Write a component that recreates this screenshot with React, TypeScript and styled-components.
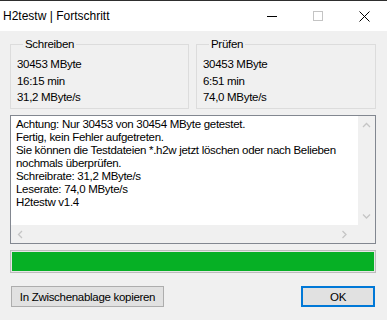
import React from "react";
import styled, { createGlobalStyle } from "styled-components";

const Global = createGlobalStyle`
  html, body { margin: 0; padding: 0; background: #f0f0f0; }
  * { box-sizing: border-box; }
`;

const FONT = `"Liberation Sans", Arial, sans-serif`;

const Window = styled.div`
  width: 387px;
  height: 320px;
  display: flex;
  flex-direction: column;
  background: #f0f0f0;
  border-top: 1px solid #2e2e2e;
  font-family: ${FONT};
  font-size: 11.5px;
  letter-spacing: -0.3px;
  color: #000;
  overflow: hidden;
`;

const TitleBar = styled.div`
  height: 30px;
  background: #fff;
  display: flex;
  align-items: center;
  flex-shrink: 0;
`;

const Title = styled.div`
  flex: 1;
  padding-left: 3px;
  font-size: 12px;
  letter-spacing: 0;
  color: #000;
`;

const CtrlButton = styled.div`
  width: 46px;
  height: 30px;
  display: flex;
  align-items: center;
  justify-content: center;
`;

const Body = styled.div`
  flex: 1;
  display: flex;
  flex-direction: column;
  padding: 6px 11px 0 10px;
`;

const GroupRow = styled.div`
  display: grid;
  grid-template-columns: 179px 180px;
  column-gap: 7px;
`;

const Group = styled.fieldset`
  margin: 0;
  padding: 5px 6px 3px 6px;
  min-width: 0;
  border: 1px solid #dcdcdc;
  height: 72px;
`;

const Legend = styled.legend`
  padding: 0 2px;
  margin-left: 6px;
  line-height: 14px;
  font-size: 11.5px;
`;

const GroupLine = styled.div`
  line-height: 16.5px;
  white-space: nowrap;
`;

const EditBox = styled.div`
  margin-top: 6px;
  height: 129px;
  border: 1px solid #828790;
  display: grid;
  grid-template-columns: 1fr 17px;
  grid-template-rows: 1fr 19px;
  background: #fff;
`;

const EditText = styled.div`
  padding: 2px 0 0 5px;
  line-height: 13px;
  white-space: nowrap;
  overflow: hidden;
  background: #fff;
`;

const VScroll = styled.div`
  background: #f0f0f0;
  display: flex;
  flex-direction: column;
  justify-content: space-between;
  align-items: center;
  padding: 6px 0 4px;
`;

const HScroll = styled.div`
  grid-column: 1 / 2;
  background: #f0f0f0;
  border-top: 1px solid #fff;
  display: flex;
  justify-content: space-between;
  align-items: center;
  padding: 0 10px 0 6px;
`;

const Corner = styled.div`
  background: #f0f0f0;
`;

const Progress = styled.div`
  margin-top: 6px;
  height: 23px;
  border: 1px solid #bcbcbc;
  background: #e6e6e6;
  padding: 1px;
`;

const ProgressFill = styled.div`
  height: 100%;
  background: #06b025;
`;

const ButtonRow = styled.div`
  margin-top: 13px;
  display: flex;
  justify-content: space-between;
  padding: 0 1px;
`;

const Button = styled.button<{ $default?: boolean; $w: number }>`
  width: ${(p) => p.$w}px;
  height: 21px;
  padding: 0;
  font-family: ${FONT};
  font-size: 11.5px;
  letter-spacing: -0.3px;
  color: #000;
  background: #e1e1e1;
  border: ${(p) => (p.$default ? "2px solid #0078d7" : "1px solid #adadad")};
  display: flex;
  align-items: center;
  justify-content: center;
`;

const Arrow = ({ dir }: { dir: "up" | "down" | "left" | "right" }) => {
  const d = {
    up: "M1 5 L4.5 1.5 L8 5",
    down: "M1 1.5 L4.5 5 L8 1.5",
    left: "M5 1 L1.5 4.5 L5 8",
    right: "M1.5 1 L5 4.5 L1.5 8",
  }[dir];
  const vertical = dir === "up" || dir === "down";
  return (
    <svg width={vertical ? 9 : 7} height={vertical ? 7 : 9} viewBox={vertical ? "0 0 9 7" : "0 0 7 9"}>
      <path d={d} fill="none" stroke="#c5c5c5" strokeWidth="1.3" />
    </svg>
  );
};

export default function App() {
  return (
    <>
      <Global />
      <Window>
        <TitleBar>
          <Title>H2testw | Fortschritt</Title>
          <CtrlButton>
            <svg width="10" height="10" viewBox="0 0 10 10">
              <path d="M0 5.5 H10" stroke="#000" strokeWidth="1" />
            </svg>
          </CtrlButton>
          <CtrlButton>
            <svg width="10" height="10" viewBox="0 0 10 10">
              <rect x="0.5" y="0.5" width="9" height="9" fill="none" stroke="#c4c4c4" strokeWidth="1" />
            </svg>
          </CtrlButton>
          <CtrlButton>
            <svg width="11" height="11" viewBox="0 0 11 11">
              <path d="M0.5 0.5 L10.5 10.5 M10.5 0.5 L0.5 10.5" stroke="#000" strokeWidth="1" />
            </svg>
          </CtrlButton>
        </TitleBar>
        <Body>
          <GroupRow>
            <Group>
              <Legend>Schreiben</Legend>
              <GroupLine>30453 MByte</GroupLine>
              <GroupLine>16:15 min</GroupLine>
              <GroupLine>31,2 MByte/s</GroupLine>
            </Group>
            <Group>
              <Legend>Prüfen</Legend>
              <GroupLine>30453 MByte</GroupLine>
              <GroupLine>6:51 min</GroupLine>
              <GroupLine>74,0 MByte/s</GroupLine>
            </Group>
          </GroupRow>
          <EditBox>
            <EditText>
              Achtung: Nur 30453 von 30454 MByte getestet.
              <br />
              Fertig, kein Fehler aufgetreten.
              <br />
              Sie können die Testdateien *.h2w jetzt löschen oder nach Belieben
              <br />
              nochmals überprüfen.
              <br />
              Schreibrate: 31,2 MByte/s
              <br />
              Leserate: 74,0 MByte/s
              <br />
              H2testw v1.4
            </EditText>
            <VScroll>
              <Arrow dir="up" />
              <Arrow dir="down" />
            </VScroll>
            <HScroll>
              <Arrow dir="left" />
              <Arrow dir="right" />
            </HScroll>
            <Corner />
          </EditBox>
          <Progress>
            <ProgressFill />
          </Progress>
          <ButtonRow>
            <Button $w={153}>In Zwischenablage kopieren</Button>
            <Button $w={74} $default>
              OK
            </Button>
          </ButtonRow>
        </Body>
      </Window>
    </>
  );
}
